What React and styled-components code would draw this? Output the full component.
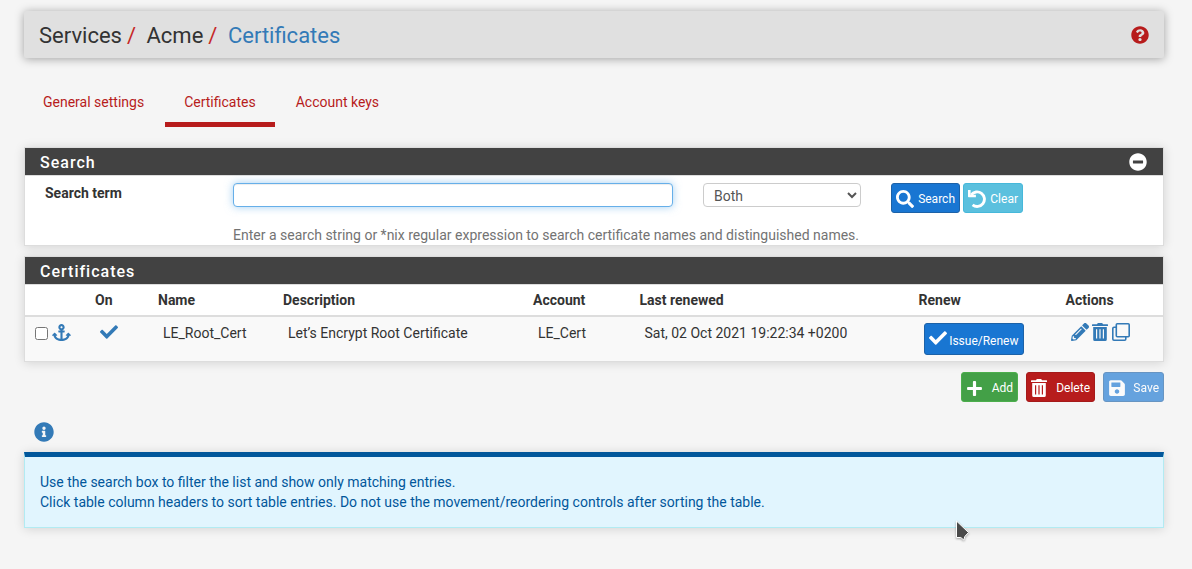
import React from "react";
import styled, { createGlobalStyle } from "styled-components";
import {
  FaAnchor,
  FaCheck,
  FaInfoCircle,
  FaMinusCircle,
  FaPencilAlt,
  FaPlus,
  FaQuestionCircle,
  FaSave,
  FaSearch,
} from "react-icons/fa";

const GlobalStyle = createGlobalStyle`
  *, *::before, *::after { box-sizing: border-box; }
  body {
    margin: 0;
    background: #f5f5f5;
    color: #333;
    font: 14px/20px Roboto, "Liberation Sans", sans-serif;
  }
  svg { display: block; flex: none; }
`;

const Page = styled.div`
  position: relative;
  width: 1192px;
  height: 569px;
  padding: 11px 28px 0 24px;
  overflow: hidden;
`;

const Header = styled.header`
  display: flex;
  align-items: center;
  justify-content: space-between;
  height: 47px;
  padding: 1px 15px 0;
  border-radius: 2px;
  background: #e0e0e0;
  box-shadow: 0 1px 10px rgba(0, 0, 0, 0.35);
  color: #b71c1c;
`;

const Breadcrumb = styled.ol`
  display: flex;
  margin: 0;
  padding: 1px 0 0;
  list-style: none;
  font-size: 22px;
  line-height: 24px;
`;

const Crumb = styled.li`
  color: ${(p) => (p.$active ? "#337ab7" : "#333")};
  &:not(:first-child)::before {
    content: "/";
    padding: 0 10.5px 0 5px;
    color: #c62828;
  }
`;

const Tabs = styled.nav`
  display: flex;
  gap: 2px;
  margin-top: 24px;
`;

const Tab = styled.a`
  height: 45px;
  padding: 10px 19px 0;
  border-bottom: 5px solid ${(p) => (p.$active ? "#b71c1c" : "transparent")};
  color: #b71c1c;
`;

const Panel = styled.section`
  height: ${(p) => p.$height}px;
  margin-top: ${(p) => p.$gap}px;
  border: 1px solid #ddd;
  background: #fff;
  box-shadow: 0 1px 10px rgba(0, 0, 0, 0.14);
`;

const PanelTitle = styled.h2`
  display: flex;
  align-items: center;
  justify-content: space-between;
  height: 28px;
  margin: 0;
  padding: 2px 16px 0 15px;
  border-bottom: 1px solid #ddd;
  background: #424242;
  background-clip: padding-box;
  color: #fff;
  font-size: 16px;
  font-weight: 500;
  letter-spacing: 1px;
  svg { margin-top: -1px; }
`;

const SearchForm = styled.div`
  display: grid;
  grid-template-columns: 188px 440px 188px auto;
  padding: 7px 0 0 20px;
`;

const Label = styled.label`
  font-weight: 700;
`;

const TextInput = styled.input`
  height: 24px;
  padding: 0 10px;
  border: 1px solid #66afe9;
  border-radius: 4px;
  outline: none;
  background: #fff;
  box-shadow: inset 0 1px 1px rgba(0, 0, 0, 0.075), 0 0 8px rgba(102, 175, 233, 0.6);
`;

const Select = styled.select`
  width: 158px;
  height: 24px;
  margin-left: 30px;
  padding: 1px 0 0 6px;
  border: 1px solid #ccc;
  border-radius: 4px;
  background: #fff;
  color: #555;
  font: 14px Roboto, sans-serif;
`;

const Help = styled.span`
  grid-column: 2 / -1;
  margin-top: 12px;
  color: #737373;
`;

const SearchButtons = styled.div`
  display: flex;
  gap: 3px;
  height: 30px;
  margin-left: 30px;
`;

const tones = {
  primary: ["#1976d2", "#1c62a8"],
  info: ["#5bc0de", "#46b8da"],
  success: ["#43a047", "#4cae4c"],
  danger: ["#b71c1c", "#a51a1a"],
};

const Button = styled.button`
  display: flex;
  align-items: center;
  justify-content: space-between;
  width: ${(p) => p.$width}px;
  height: ${(p) => p.$height || 30}px;
  padding: 2px 4px 0;
  border: 1px solid ${(p) => tones[p.$tone][1]};
  border-radius: 3px;
  background: ${(p) => tones[p.$tone][0]};
  color: #fff;
  font: 12px/18px Roboto, sans-serif;
  opacity: ${(p) => (p.$disabled ? 0.65 : 1)};
`;

const RenewButton = styled(Button)`
  svg { margin-top: -4px; }
  span { margin-top: 2px; }
`;

const Table = styled.table`
  width: 100%;
  table-layout: fixed;
  border-collapse: separate;
  border-spacing: 0;
`;

const Th = styled.th`
  width: ${(p) => p.$width}px;
  height: 32px;
  padding: 0 5px;
  border-bottom: 2px solid #ddd;
  text-align: left;
`;

const Td = styled.td`
  height: 44px;
  padding: 6px 0 0 10px;
  background: #f9f9f9;
  vertical-align: top;
`;

const IconRow = styled.div`
  display: flex;
  gap: ${(p) => p.$gap}px;
  color: #337ab7;
`;

const Checkbox = styled.input`
  width: 13px;
  height: 13px;
  margin: 4px 0 0;
`;

const Actions = styled.div`
  display: flex;
  justify-content: flex-end;
  gap: 8px;
  margin-top: 10px;
`;

const InfoToggle = styled.div`
  margin: 19.5px 0 10.5px 10px;
  color: #337ab7;
`;

const InfoBox = styled.div`
  height: 76px;
  padding: 15px;
  border: 1px solid #b2ebf2;
  border-top: 5px solid #01579b;
  background: #e1f5fe;
  box-shadow: 0 1px 10px rgba(0, 0, 0, 0.14);
  color: #01579b;
`;

const Pointer = styled.svg`
  position: absolute;
  left: 953px;
  top: 518px;
  filter: drop-shadow(0 1px 1px rgba(0, 0, 0, 0.35));
`;

const TrashIcon = () => (
  <svg width="16" height="18" viewBox="0 0 16 18" fill="currentColor">
    <path
      fillRule="evenodd"
      d="M.5 1.2H5L5.8 0h4.4L11 1.2h4.5q.5 0 .5.5v1.2H0V1.7q0-.5.5-.5ZM1.2 4h13.6v12.4q0 1.6-1.6 1.6H2.8q-1.6 0-1.6-1.6ZM4 6.2v9.4h1.2V6.2Zm3.4 0v9.4h1.2V6.2Zm3.4 0v9.4H12V6.2Z"
    />
  </svg>
);

const CloneIcon = () => (
  <svg width="18" height="18" viewBox="0 0 18 18" fill="none" stroke="currentColor" strokeWidth="1.6">
    <rect x="4.3" y=".8" width="12.9" height="12.9" rx="1" />
    <path d="M4.3 4.2H2q-1.2 0-1.2 1.2V16q0 1.2 1.2 1.2h10.6q1.2 0 1.2-1.2v-2.3" />
  </svg>
);

const UndoIcon = () => (
  <svg width="18" height="18" viewBox="0 0 18 18" fill="none">
    <path d="M3.2 4.9A7.3 7.3 0 1 1 4.6 14.9" stroke="currentColor" strokeWidth="2.9" />
    <path d="M0 0h2.6v4.7h5.3v2.6H.7Q0 7.3 0 6.6Z" fill="currentColor" />
  </svg>
);

const columns = [
  ["", 65],
  ["On", 63],
  ["Name", 125],
  ["Description", 250],
  ["Account", 106.5],
  ["Last renewed", 279],
  ["Renew", 147],
  ["Actions", 102.5],
];

export default function App() {
  return (
    <Page>
      <GlobalStyle />
      <Header>
        <Breadcrumb>
          <Crumb>Services</Crumb>
          <Crumb>Acme</Crumb>
          <Crumb $active>Certificates</Crumb>
        </Breadcrumb>
        <FaQuestionCircle size={18} />
      </Header>

      <Tabs>
        <Tab>General settings</Tab>
        <Tab $active>Certificates</Tab>
        <Tab>Account keys</Tab>
      </Tabs>

      <Panel $height={99} $gap={20}>
        <PanelTitle>
          Search
          <FaMinusCircle size={18} />
        </PanelTitle>
        <SearchForm>
          <Label>Search term</Label>
          <TextInput />
          <Select defaultValue="Both">
            <option>Both</option>
          </Select>
          <SearchButtons>
            <Button $tone="primary" $width={69}>
              <FaSearch size={18} />
              <span>Search</span>
            </Button>
            <Button $tone="info" $width={60}>
              <UndoIcon />
              <span>Clear</span>
            </Button>
          </SearchButtons>
          <Help>
            Enter a search string or *nix regular expression to search certificate names and distinguished names.
          </Help>
        </SearchForm>
      </Panel>

      <Panel $height={106} $gap={10}>
        <PanelTitle>Certificates</PanelTitle>
        <Table>
          <thead>
            <tr>
              {columns.map(([name, width]) => (
                <Th key={name} $width={width}>{name}</Th>
              ))}
            </tr>
          </thead>
          <tbody>
            <tr>
              <Td>
                <IconRow $gap={4}>
                  <Checkbox type="checkbox" />
                  <FaAnchor size={19} />
                </IconRow>
              </Td>
              <Td>
                <IconRow>
                  <FaCheck size={18} />
                </IconRow>
              </Td>
              <Td>LE_Root_Cert</Td>
              <Td>Let’s Encrypt Root Certificate</Td>
              <Td>LE_Cert</Td>
              <Td>Sat, 02 Oct 2021 19:22:34 +0200</Td>
              <Td>
                <RenewButton $tone="primary" $width={100} $height={32}>
                  <FaCheck size={18} />
                  <span>Issue/Renew</span>
                </RenewButton>
              </Td>
              <Td>
                <IconRow $gap={3.5}>
                  <FaPencilAlt size={18} />
                  <TrashIcon />
                  <CloneIcon />
                </IconRow>
              </Td>
            </tr>
          </tbody>
        </Table>
      </Panel>

      <Actions>
        <Button $tone="success" $width={57}>
          <FaPlus size={17} />
          <span>Add</span>
        </Button>
        <Button $tone="danger" $width={69}>
          <TrashIcon />
          <span>Delete</span>
        </Button>
        <Button $tone="primary" $width={61} $disabled>
          <FaSave size={18} />
          <span>Save</span>
        </Button>
      </Actions>

      <InfoToggle>
        <FaInfoCircle size={20} />
      </InfoToggle>
      <InfoBox>
        Use the search box to filter the list and show only matching entries.
        <br />
        Click table column headers to sort table entries. Do not use the movement/reordering controls after sorting the
        table.
      </InfoBox>

      <Pointer width="18" height="24" viewBox="0 0 18 24">
        <path d="M3.5 3v16.5h4.3l3 2.5 1-3.5 3.7-4Z" fill="#4a4a4a" stroke="#fff" strokeWidth="1" />
      </Pointer>
    </Page>
  );
}
